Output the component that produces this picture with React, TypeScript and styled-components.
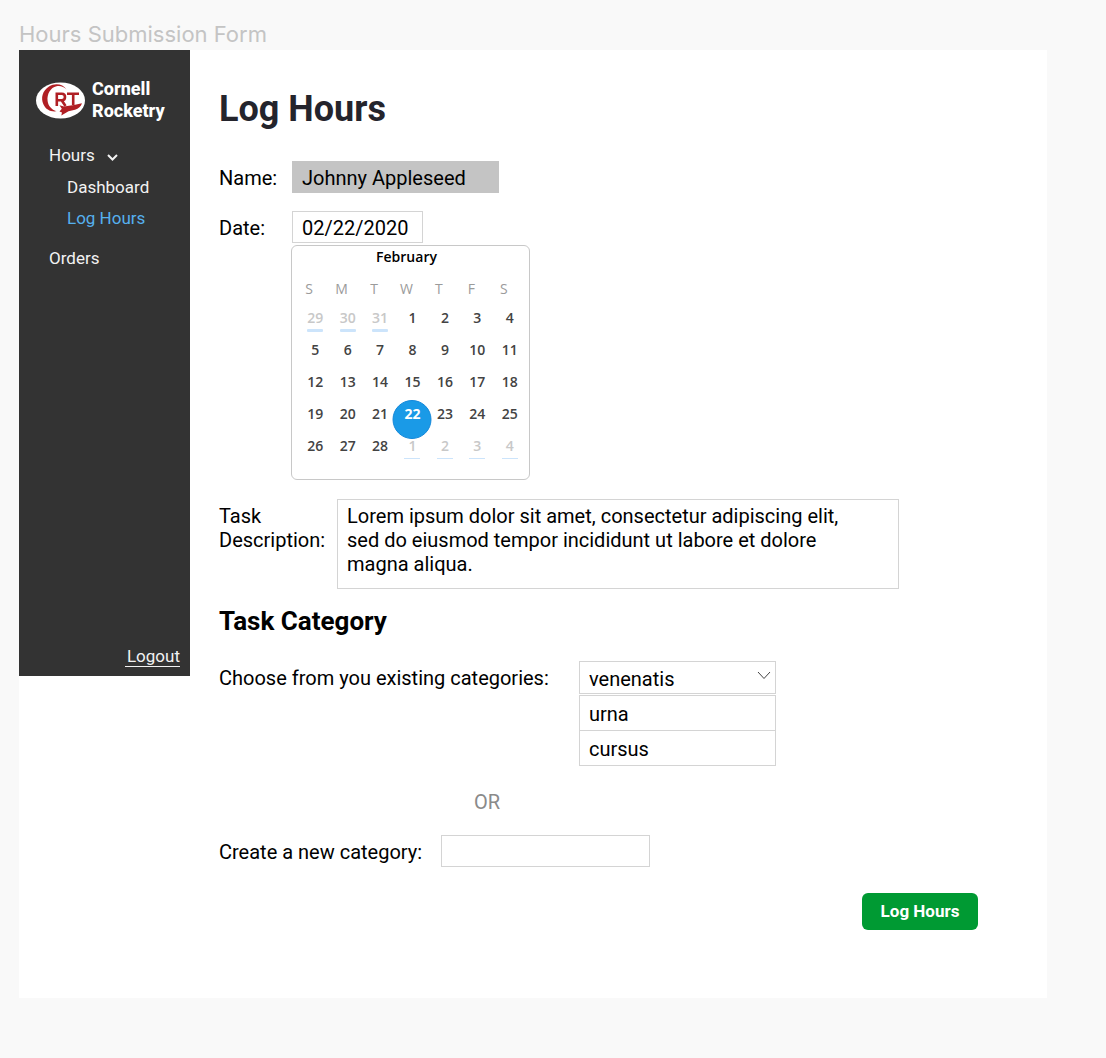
import React, { useState } from "react";
import styled, { createGlobalStyle, css } from "styled-components";

const GlobalStyle = createGlobalStyle`
  *, *::before, *::after { box-sizing: border-box; }
  body {
    margin: 0;
    background: #f9f9f9;
    color: #000;
    font-family: Roboto, "Liberation Sans", sans-serif;
    font-size: 20px;
    line-height: 24px;
  }
  button, input, select, textarea { font: inherit; color: inherit; margin: 0; }
`;

const Page = styled.div`
  padding: 18px 59px 60px 19px;
`;

const BoardTitle = styled.div`
  color: #c4c4c4;
  font-family: Inter, sans-serif;
  font-size: 22px;
  line-height: 32px;
`;

const Board = styled.div`
  display: flex;
  align-items: flex-start;
  background: #fff;
`;

const Sidebar = styled.aside`
  display: flex;
  flex-direction: column;
  flex: none;
  width: 171px;
  min-height: 626px;
  padding: 28px 10px 7px 17px;
  background: #333;
  color: #f2f2f2;
  font-size: 17px;
`;

const Brand = styled.div`
  display: flex;
  align-items: center;
  gap: 7px;
  color: #fff;
  font-size: 18px;
  font-weight: 800;
  line-height: 22px;
`;

const Menu = styled.ul`
  list-style: none;
  margin: 21px 0 0;
  padding: 0 0 0 13px;
`;

const SubMenu = styled.ul`
  list-style: none;
  margin: 8px 0 16px;
  padding: 0 0 0 18px;
  display: grid;
  gap: 7px;
`;

const MenuItem = styled.li``;

const NavLink = styled.a<{ $active?: boolean }>`
  display: block;
  color: ${(p) => (p.$active ? "#56b0ee" : "inherit")};
  text-decoration: none;
`;

const NavToggle = styled.button`
  display: flex;
  align-items: center;
  gap: 12px;
  padding: 0;
  border: 0;
  background: none;

  svg { margin-top: 4px; }
`;

const Logout = styled.a`
  align-self: flex-end;
  margin-top: auto;
  padding-left: 2px;
  border-bottom: 1px solid #f2f2f2;
  color: inherit;
  line-height: 20px;
  margin-bottom: 2px;
  text-decoration: none;
`;

const Main = styled.main`
  flex: 1;
  min-width: 0;
  padding: 38px 69px 68px 29px;
`;

const Title = styled.h1`
  margin: 0 0 31px;
  color: #24242c;
  font-size: 36px;
  line-height: 42px;
`;

const Subtitle = styled.h2`
  margin: 16px 0 24px;
  font-size: 26px;
  line-height: 32px;
`;

const Row = styled.div<{ $gap?: number }>`
  display: flex;
  align-items: flex-start;
  margin-bottom: ${(p) => p.$gap ?? 0}px;
`;

const Label = styled.label<{ $width: number }>`
  flex: none;
  width: ${(p) => p.$width}px;
  padding-top: 5px;
`;

const box = css`
  display: block;
  border: 1px solid #d4d4d4;
  border-radius: 0;
  background: #fff;
  outline: 0;
`;

const TextBox = styled.input<{ $width: number }>`
  ${box}
  width: ${(p) => p.$width}px;
  height: 32px;
  padding: 2px 9px 0;

  &:read-only {
    border-color: #c4c4c4;
    background: #c4c4c4;
  }
`;

const TextArea = styled.textarea`
  ${box}
  flex: 1;
  min-width: 0;
  max-width: 562px;
  height: 90px;
  padding: 4px 9px;
  resize: none;
`;

const Calendar = styled.div`
  width: 239px;
  margin: 2px 0 0 -1px;
  padding: 1px 3px 17px 7px;
  border: 1px solid #c8c8c8;
  border-radius: 6px;
  background: #fff;
  font-family: "Open Sans", "Noto Sans", sans-serif;
  font-size: 14px;
  line-height: 20px;
`;

const Month = styled.table`
  width: 100%;
  table-layout: fixed;
  border-collapse: collapse;
`;

const MonthName = styled.caption`
  padding-right: 12px;
  font-weight: 600;
`;

const Weekday = styled.th`
  padding: 12px 12px 3px 0;
  color: #9b9b9b;
  font-weight: 400;
`;

const DayCell = styled.td`
  padding: 0;
`;

const Day = styled.button<{ $outside?: "before" | "after"; $selected: boolean }>`
  position: relative;
  z-index: 0;
  display: flex;
  flex-direction: column;
  align-items: center;
  width: 100%;
  height: 32px;
  padding: 6px 0 0;
  border: 0;
  background: none;
  color: ${(p) => (p.$outside ? "#c8c8c8" : "#434343")};
  font-weight: 600;
  line-height: 20px;

  ${(p) =>
    p.$outside &&
    css`
      &::after {
        content: "";
        width: 16px;
        height: ${p.$outside === "before" ? 3 : 1}px;
        margin-top: ${p.$outside === "before" ? 1 : 2}px;
        border-radius: ${p.$outside === "before" ? 1 : 0}px;
        background: #cce4fb;
      }
    `}

  ${(p) =>
    p.$selected &&
    css`
      color: #fff;
      font-weight: 700;

      &::before {
        content: "";
        position: absolute;
        z-index: -1;
        top: 2px;
        left: 50%;
        width: 39px;
        height: 39px;
        transform: translateX(-50%);
        border: 1px solid #1488da;
        border-radius: 50%;
        background: #1a9ae7;
      }
    `}
`;

const Picker = styled.div`
  width: 197px;
`;

const SelectWrap = styled.div`
  display: grid;
  align-items: center;

  > * { grid-area: 1 / 1; }

  > svg {
    justify-self: end;
    margin: 0 5px 4px 0;
    pointer-events: none;
  }
`;

const Select = styled.select`
  ${box}
  width: 100%;
  height: 33px;
  padding: 2px 9px 0;
  appearance: none;
`;

const Options = styled.ul`
  ${box}
  margin: 1px 0 0;
  padding: 0;
  list-style: none;
`;

const Option = styled.li`
  & + & { border-top: 1px solid #d4d4d4; }
`;

const OptionButton = styled.button`
  display: block;
  width: 100%;
  height: 34px;
  padding: 1px 9px 0;
  border: 0;
  background: none;
  text-align: left;
`;

const Or = styled.p`
  margin: 24px 0 21px 255px;
  color: #8a8a8a;
`;

const Actions = styled.div`
  display: flex;
  justify-content: flex-end;
  margin-top: 26px;
`;

const Submit = styled.button`
  width: 116px;
  height: 37px;
  padding: 0 0 2px;
  border: 0;
  border-radius: 6px;
  background: #009a33;
  color: #fff;
  font-size: 17px;
  font-weight: 700;
`;

function Logo() {
  return (
    <svg width="49" height="37" viewBox="0 0 49 37" aria-hidden="true">
      <ellipse cx="24.5" cy="18.5" rx="24.5" ry="18" fill="#fff" />
      <path
        d="M30.500 7.500C27 1.800 19 .6 13 4.500C6.500 8.800 4.500 16 7.500 22.500C9.800 27.500 14.500 30 20.500 29.300C15.500 27.500 12.200 24 11.600 19C10.800 12 14.500 5.600 20.500 4.300C24.500 3.500 28 4.800 30.500 7.500Z"
        fill="#b01f24"
      />
      <path
        d="M20.800 24V11.700H25.800Q29 11.700 29 15Q29 18.300 25.800 18.300H20.800M25.500 18L29.500 24M31 11.700H43M37.200 11.700V23"
        fill="none"
        stroke="#b01f24"
        strokeWidth="2.600"
      />
      <path
        d="M23.500 23.300L28 24.500L38 23L46 21.300C45 24.500 42.500 26.700 39 27.800L32.500 29.300L25.300 33.500L26 30.500L23.500 29.500L25.800 26.800Z"
        fill="#b01f24"
      />
    </svg>
  );
}

const weekdays = ["Sunday", "Monday", "Tuesday", "Wednesday", "Thursday", "Friday", "Saturday"];

type DayInfo = { n: number; outside?: "before" | "after" };

const days: DayInfo[] = [
  ...[29, 30, 31].map((n) => ({ n, outside: "before" as const })),
  ...Array.from({ length: 28 }, (_, i) => ({ n: i + 1 })),
  ...[1, 2, 3, 4].map((n) => ({ n, outside: "after" as const })),
];

const weeks = [0, 1, 2, 3, 4].map((w) => days.slice(w * 7, w * 7 + 7));

const description =
  "Lorem ipsum dolor sit amet, consectetur adipiscing elit,\nsed do eiusmod tempor incididunt ut labore et dolore\nmagna aliqua.";

export default function App() {
  const [day, setDay] = useState(22);
  const [category, setCategory] = useState("venenatis");

  return (
    <>
      <GlobalStyle />
      <Page>
        <BoardTitle>Hours Submission Form</BoardTitle>
        <Board>
          <Sidebar>
            <Brand>
              <Logo />
              <span>
                Cornell
                <br />
                Rocketry
              </span>
            </Brand>
            <nav>
              <Menu>
                <MenuItem>
                  <NavToggle type="button" aria-expanded="true">
                    Hours
                    <svg width="11" height="7" viewBox="0 0 11 7" aria-hidden="true">
                      <path d="M1 1L5.500 5.500L10 1" fill="none" stroke="currentColor" strokeWidth="2" />
                    </svg>
                  </NavToggle>
                  <SubMenu>
                    <MenuItem>
                      <NavLink href="#dashboard">Dashboard</NavLink>
                    </MenuItem>
                    <MenuItem>
                      <NavLink href="#log" $active>
                        Log Hours
                      </NavLink>
                    </MenuItem>
                  </SubMenu>
                </MenuItem>
                <MenuItem>
                  <NavLink href="#orders">Orders</NavLink>
                </MenuItem>
              </Menu>
            </nav>
            <Logout href="#logout">Logout</Logout>
          </Sidebar>

          <Main>
            <Title>Log Hours</Title>
            <form onSubmit={(e) => e.preventDefault()}>
              <Row $gap={18}>
                <Label htmlFor="name" $width={73}>Name:</Label>
                <TextBox id="name" $width={207} value="Johnny Appleseed" readOnly />
              </Row>
              <Row $gap={19}>
                <Label htmlFor="date" $width={73}>Date:</Label>
                <div>
                  <TextBox
                    id="date"
                    $width={131}
                    value={`02/${String(day).padStart(2, "0")}/2020`}
                    onChange={(e) => setDay(Number(e.target.value.slice(3, 5)) || day)}
                  />
                  <Calendar>
                    <Month>
                      <MonthName>February</MonthName>
                      <thead>
                        <tr>
                          {weekdays.map((d) => (
                            <Weekday key={d} scope="col">{d[0]}</Weekday>
                          ))}
                        </tr>
                      </thead>
                      <tbody>
                        {weeks.map((week, w) => (
                          <tr key={w}>
                            {week.map((d) => (
                              <DayCell key={d.n}>
                                <Day
                                  type="button"
                                  $outside={d.outside}
                                  $selected={!d.outside && d.n === day}
                                  onClick={() => !d.outside && setDay(d.n)}
                                >
                                  {d.n}
                                </Day>
                              </DayCell>
                            ))}
                          </tr>
                        ))}
                      </tbody>
                    </Month>
                  </Calendar>
                </div>
              </Row>
              <Row>
                <Label htmlFor="description" $width={118}>Task Description:</Label>
                <TextArea id="description" defaultValue={description} />
              </Row>

              <Subtitle>Task Category</Subtitle>
              <Row>
                <Label htmlFor="category" $width={360}>Choose from you existing categories:</Label>
                <Picker>
                  <SelectWrap>
                    <Select id="category" value={category} onChange={(e) => setCategory(e.target.value)}>
                      <option>venenatis</option>
                      <option>urna</option>
                      <option>cursus</option>
                    </Select>
                    <svg width="14" height="9" viewBox="0 0 14 9" aria-hidden="true">
                      <path d="M1 1L7 7.500L13 1" fill="none" stroke="#444" />
                    </svg>
                  </SelectWrap>
                  <Options>
                    {["urna", "cursus"].map((c) => (
                      <Option key={c}>
                        <OptionButton type="button" onClick={() => setCategory(c)}>{c}</OptionButton>
                      </Option>
                    ))}
                  </Options>
                </Picker>
              </Row>
              <Or>OR</Or>
              <Row>
                <Label htmlFor="new-category" $width={222}>Create a new category:</Label>
                <TextBox id="new-category" $width={209} />
              </Row>
              <Actions>
                <Submit type="submit">Log Hours</Submit>
              </Actions>
            </form>
          </Main>
        </Board>
      </Page>
    </>
  );
}
